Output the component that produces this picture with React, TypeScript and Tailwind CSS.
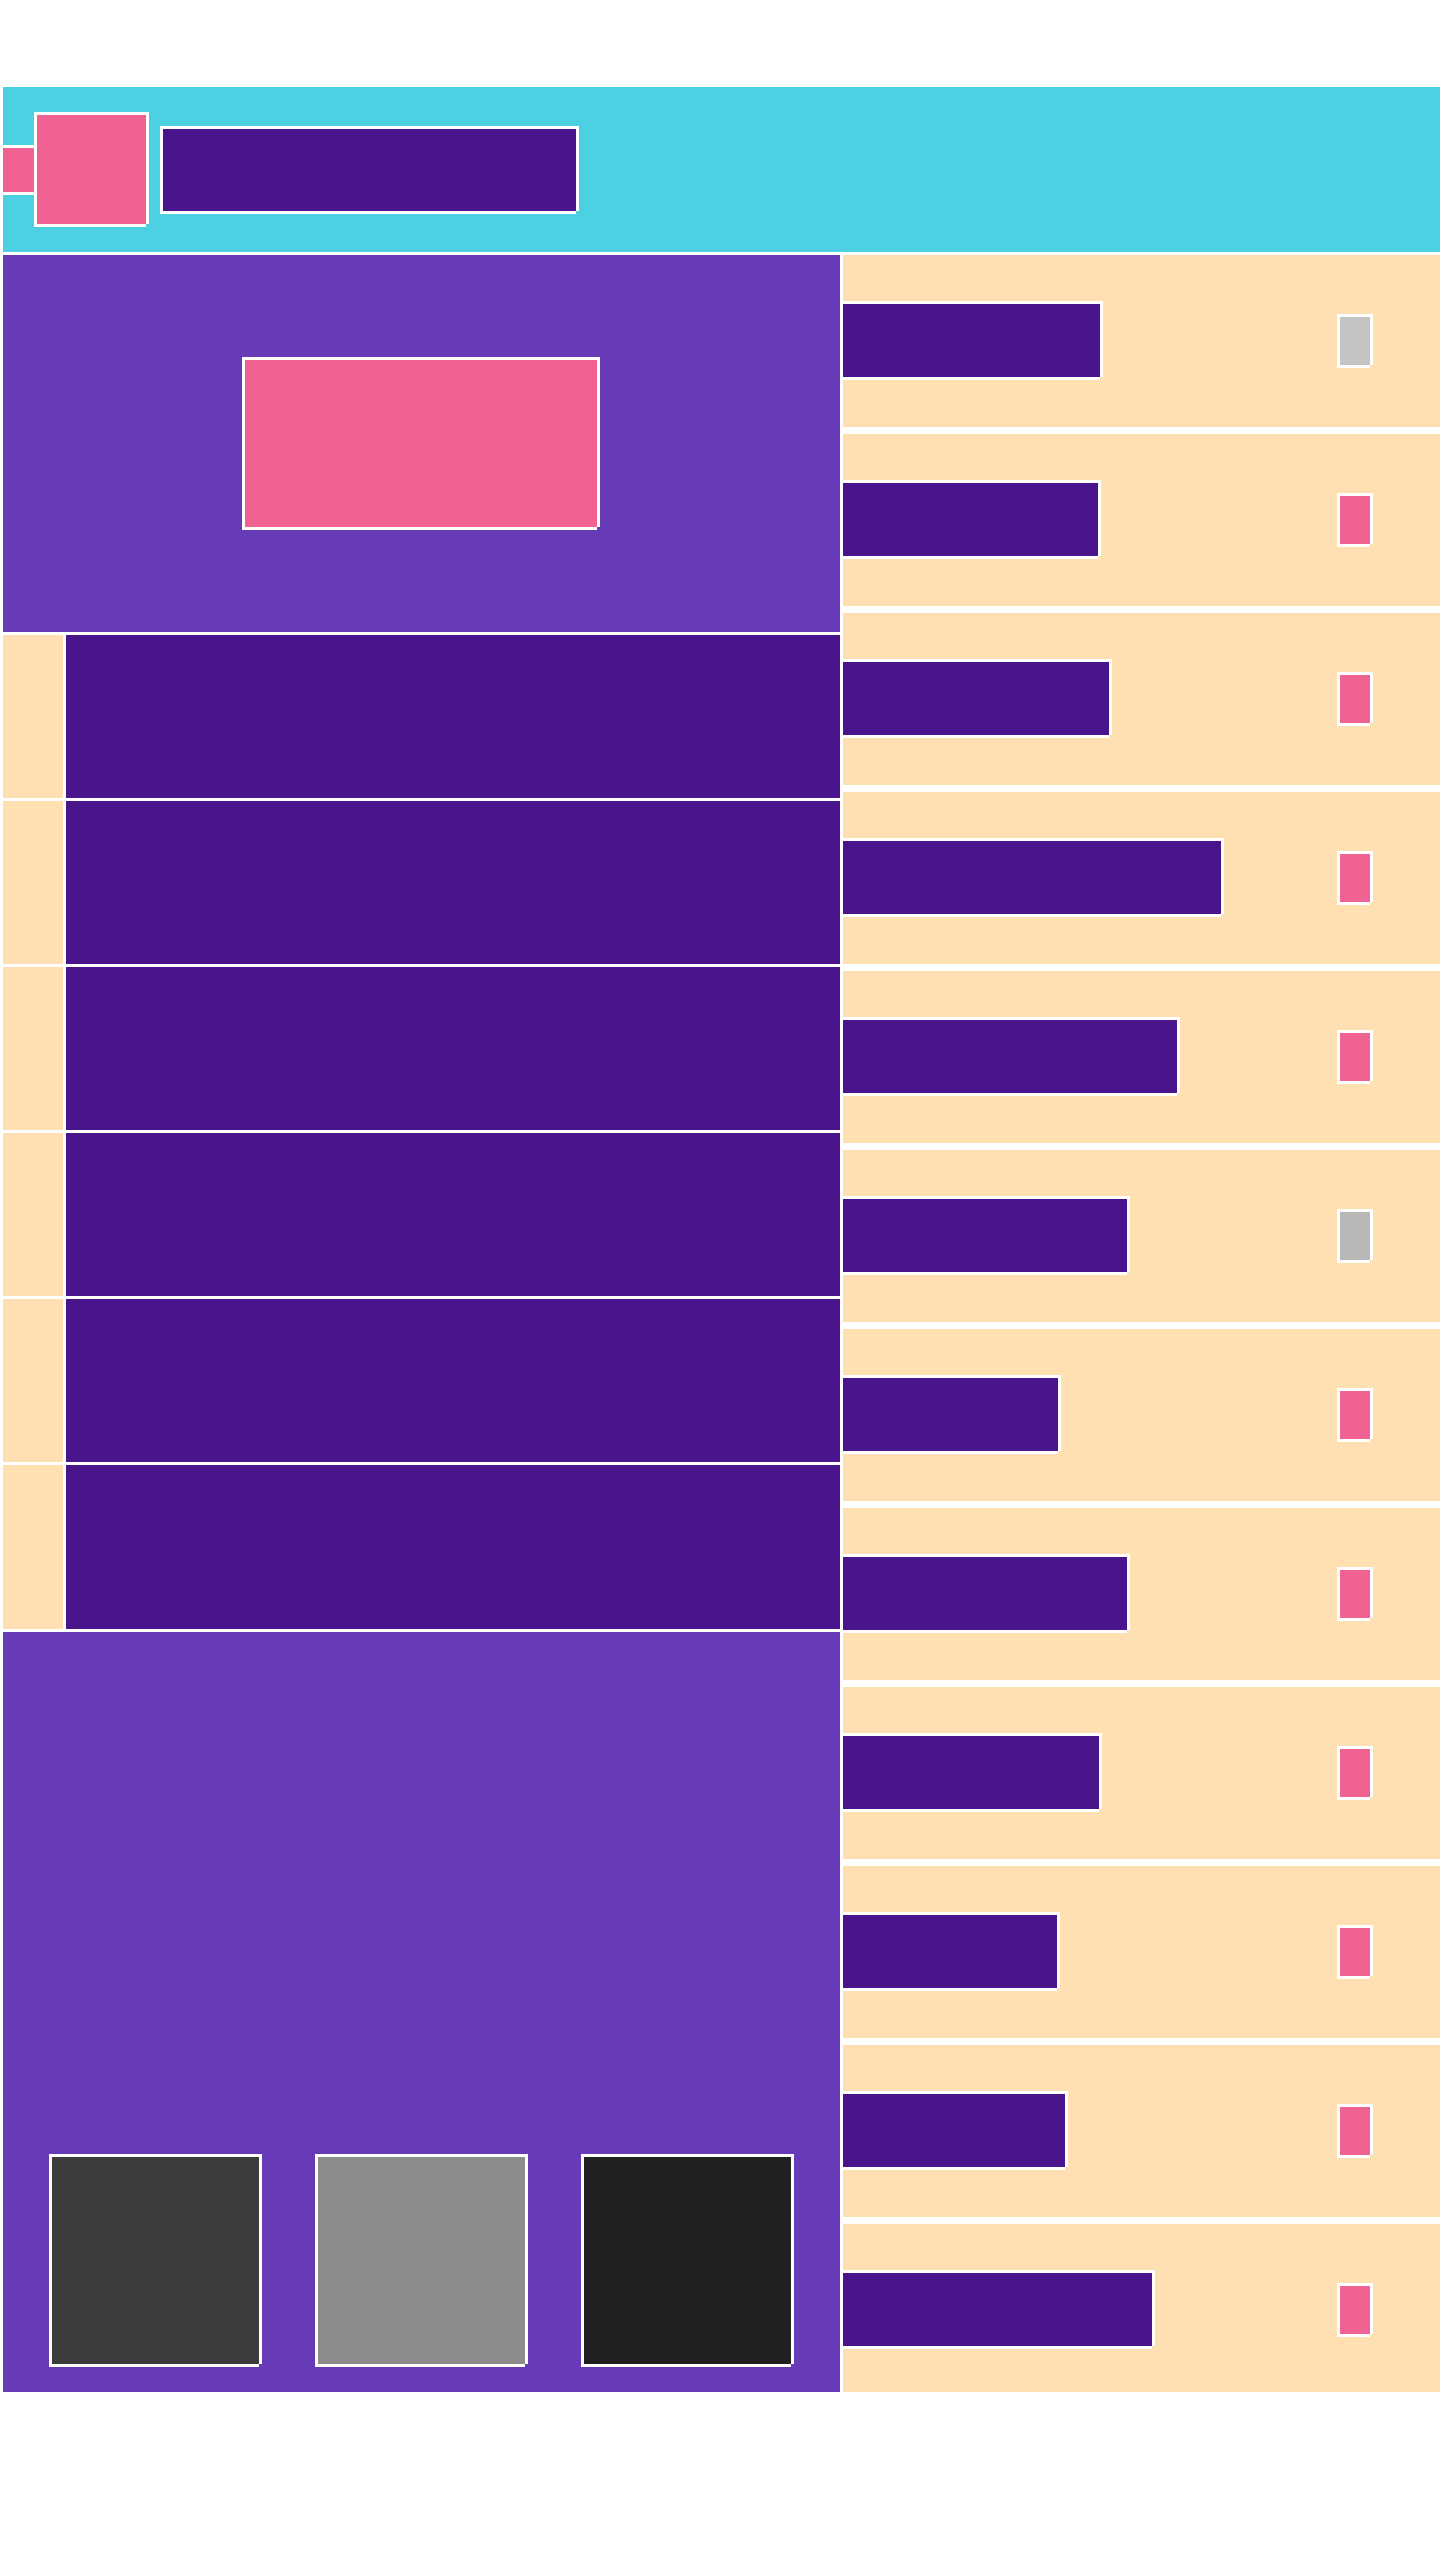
import React from "react";
import clsx from "clsx";

// White edges on every side; the lower right corner stays open.
const edge = "border-white shadow-[3px_0_0_#fff,0_3px_0_#fff]";
const framed = clsx(edge, "border-t-3 border-l-3");
const flush = clsx(edge, "border-t-3");

const PINK = "bg-[#f06292]";

const entries = [
  { width: "w-[257px]", chip: "bg-[#c4c4c4]" },
  { width: "w-[255px]", chip: PINK },
  { width: "w-[266px]", chip: PINK },
  { width: "w-[378px]", chip: PINK },
  { width: "w-[334px]", chip: PINK },
  { width: "w-[284px]", chip: "bg-[#b8b8b8]" },
  { width: "w-[215px]", chip: PINK },
  { width: "w-[284px]", chip: PINK },
  { width: "w-[256px]", chip: PINK },
  { width: "w-[214px]", chip: PINK },
  { width: "w-[222px]", chip: PINK },
  { width: "w-[309px]", chip: PINK },
];

const menuRows = [0, 1, 2, 3, 4, 5];
const tiles = ["bg-[#3c3c3c]", "bg-[#8c8c8c]", "bg-[#202020]"];

function Header() {
  return (
    <header className="flex h-[165px] items-center bg-[#4dd0e1] pb-[3px]">
      <div className={clsx(flush, PINK, "h-[47px] w-[31px]")} />
      <div className={clsx(framed, PINK, "size-28")} />
      <div className={clsx(framed, "ml-3.5 h-[85px] w-[416px] bg-[#4a148c]")} />
    </header>
  );
}

function Sidebar() {
  return (
    <aside className="flex flex-col gap-[3px]">
      <div className="flex justify-center bg-[#673ab7] pt-[102px] pr-1 pb-[105px]">
        <div className={clsx(framed, PINK, "h-[170px] w-[355px]")} />
      </div>
      <ul className="flex flex-col gap-[3px]">
        {menuRows.map((row) => (
          <li key={row} className="flex h-[163px] gap-[3px] last:h-[164px]">
            <div className="w-[60px] bg-[#ffe0b2]" />
            <div className="flex-1 bg-[#4a148c]" />
          </li>
        ))}
      </ul>
      <div className="flex flex-1 items-end justify-between bg-[#673ab7] pr-[49px] pb-7 pl-[46px]">
        {tiles.map((tone) => (
          <div key={tone} className={clsx(framed, tone, "size-[210px]")} />
        ))}
      </div>
    </aside>
  );
}

function EntryList() {
  return (
    <ul className="flex flex-col gap-[7px]">
      {entries.map((entry, index) => (
        <li
          key={index}
          className="flex items-center justify-between bg-[#ffe0b2] pt-[46px] pr-[70px] pb-[50px] last:pb-[46px]"
        >
          <div className={clsx(flush, entry.width, "h-[76px] bg-[#4a148c]")} />
          <div className={clsx(framed, entry.chip, "h-[51px] w-[33px]")} />
        </li>
      ))}
    </ul>
  );
}

export default function App() {
  return (
    <div className="flex min-h-screen flex-col gap-[3px] bg-white pt-[87px] pl-[3px]">
      <Header />
      <main className="grid grid-cols-[837fr_597fr] gap-[3px]">
        <Sidebar />
        <EntryList />
      </main>
    </div>
  );
}
